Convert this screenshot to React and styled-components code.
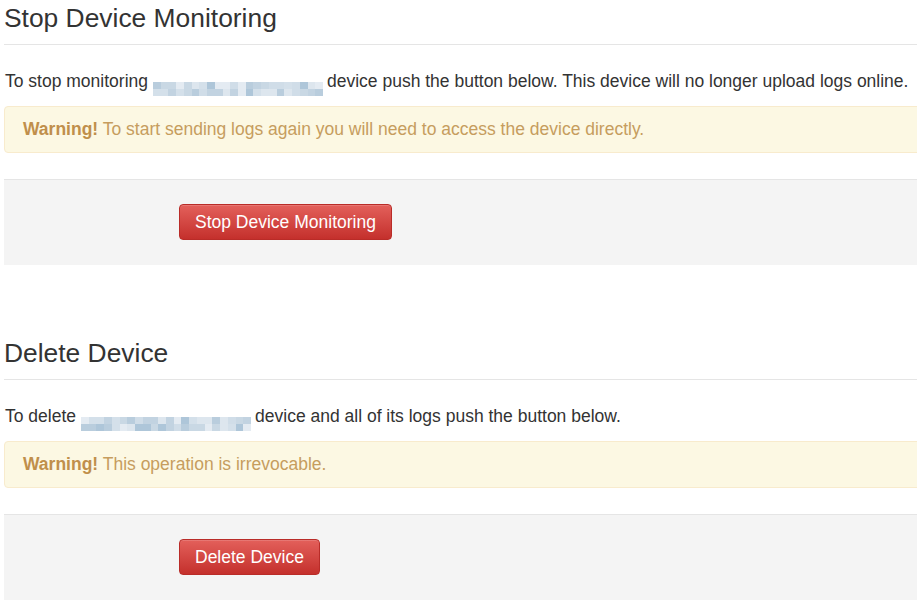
import styled, { createGlobalStyle } from "styled-components";

const GlobalStyle = createGlobalStyle`
  html, body {
    margin: 0;
    padding: 0;
    background: #fff;
    overflow: hidden;
  }
  body {
    font-family: "Liberation Sans", Arial, sans-serif;
    font-size: 17.5px;
    line-height: 25px;
    color: #333;
  }
`;

const Page = styled.div`
  width: 960px;
  padding: 4px 0 0 4px;
`;

const Section = styled.section`
  margin-top: ${(props) => (props.$first ? "0" : "74px")};
`;

const Header = styled.div`
  padding-bottom: 11px;
  border-bottom: 1px solid #e5e5e5;
`;

const Title = styled.h3`
  margin: 0;
  font-size: 26.4px;
  font-weight: 400;
  line-height: 29px;
  color: #333;
`;

const Text = styled.p`
  margin: 24px 0 10px 1px;
`;

const Blur = styled.span`
  display: inline-grid;
  grid-template-columns: repeat(22, 1fr);
  grid-template-rows: 7px 7px;
  width: 170px;
  height: 14px;
  vertical-align: -2px;
  margin: 0 4px 0 5px;
`;

const Cell = styled.span`
  background: ${(props) => props.$c};
`;

const Alert = styled.div`
  background: #fcf8e3;
  border: 1px solid #f8ebcd;
  border-radius: 4px;
  color: #c69d5e;
  padding: 10px 18px;
  b {
    font-weight: 700;
    color: #c08f4b;
  }
`;

const Actions = styled.div`
  margin-top: 26px;
  background: #f4f4f4;
  border-top: 1px solid #e5e5e5;
  padding: 24px 0 25px 175px;
`;

const DangerButton = styled.button`
  font-family: "Liberation Sans", Arial, sans-serif;
  font-size: 17.5px;
  line-height: 24px;
  color: #fff;
  padding: 5px 15px;
  border: 1px solid #b92c28;
  border-radius: 4px;
  background-image: linear-gradient(to bottom, #e3605b 0%, #c4302c 100%);
  box-shadow: inset 0 1px 0 rgba(255, 255, 255, 0.15);
  cursor: pointer;
`;

const palette = ["#dde6ee", "#c9d8e4", "#d4e0ea", "#b9cddd", "#e4ebf2", "#c2d3e1", "#aec6d9", "#d0dde8"];

function Redacted({ seed }) {
  const cells = [];
  for (let i = 0; i < 44; i++) {
    const c = palette[(i * 5 + seed * 3 + ((i * i) % 7)) % palette.length];
    cells.push(<Cell key={i} $c={c} />);
  }
  return <Blur>{cells}</Blur>;
}

function DangerSection({ first, title, before, after, warning, button, seed }) {
  return (
    <Section $first={first}>
      <Header>
        <Title>{title}</Title>
      </Header>
      <Text>
        {before}
        <Redacted seed={seed} />
        {after}
      </Text>
      <Alert>
        <b>Warning!</b> {warning}
      </Alert>
      <Actions>
        <DangerButton type="button">{button}</DangerButton>
      </Actions>
    </Section>
  );
}

export default function App() {
  return (
    <>
      <GlobalStyle />
      <Page>
        <DangerSection
          first
          seed={1}
          title="Stop Device Monitoring"
          before="To stop monitoring"
          after="device push the button below. This device will no longer upload logs online."
          warning="To start sending logs again you will need to access the device directly."
          button="Stop Device Monitoring"
        />
        <DangerSection
          seed={4}
          title="Delete Device"
          before="To delete"
          after="device and all of its logs push the button below."
          warning="This operation is irrevocable."
          button="Delete Device"
        />
      </Page>
    </>
  );
}
